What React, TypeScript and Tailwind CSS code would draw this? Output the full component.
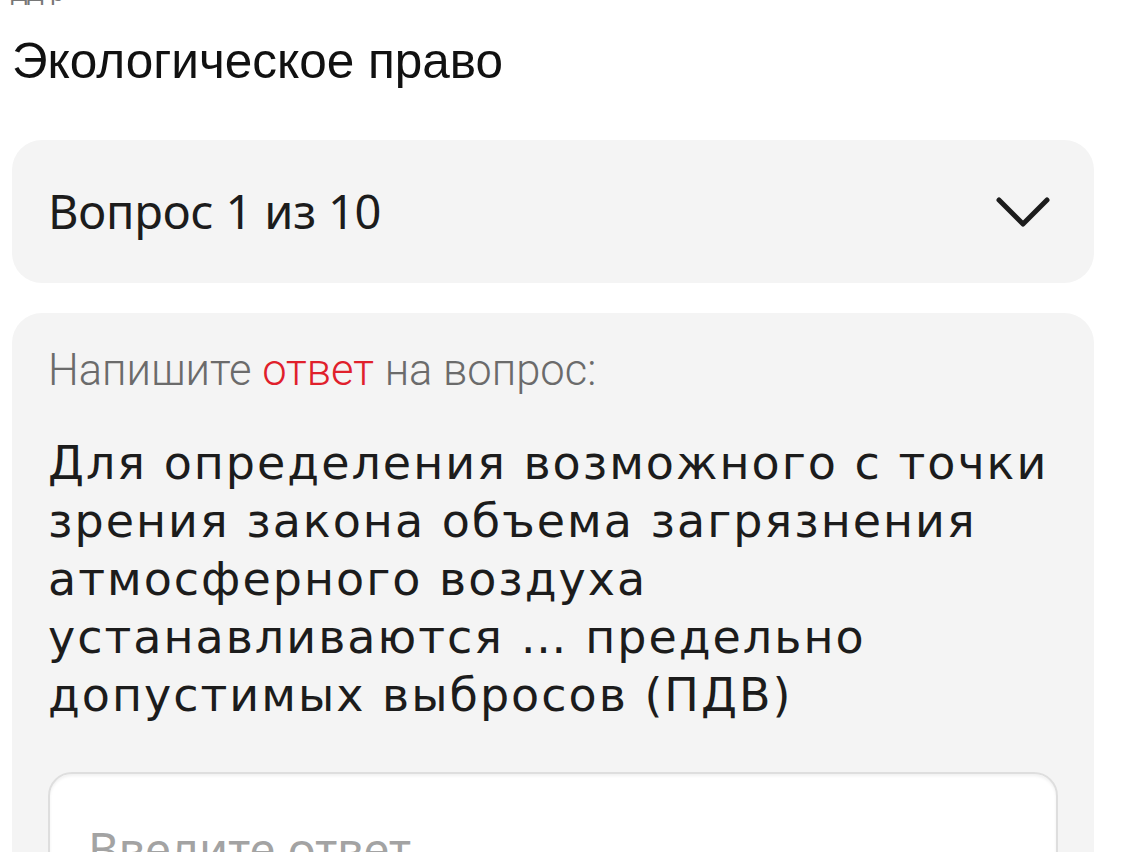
import React from "react";

export default function App() {
  return (
    <div className="w-[1142px] h-[852px] overflow-hidden bg-white">
      <div className="h-[5px] overflow-hidden relative">
        <div className="absolute left-[11px] bottom-0 text-[24px] leading-[24px] text-[#777]" style={{ fontFamily: '"Liberation Sans", Arial, sans-serif' }}>
          ДД р
        </div>
      </div>
      <h1
        className="pl-[12px] mt-[27px] text-[49.5px] leading-[58px] text-[#111] font-normal"
        style={{ fontFamily: '"Liberation Sans", Arial, sans-serif' }}
      >
        Экологическое право
      </h1>
      <div className="ml-[12px] w-[1082px] mt-[50px] flex flex-col gap-[30px]" style={{ fontFamily: '"Noto Sans", sans-serif' }}>
        <div className="h-[143px] rounded-[30px] bg-[#f4f4f4] flex items-center justify-between pl-[36px] pr-[44px]">
          <span className="text-[47px] text-[#1c1c1c] tracking-[-0.2px]">Вопрос 1 из 10</span>
          <svg width="54" height="30" viewBox="0 0 54 30" fill="none">
            <path d="M3 3 L27 27 L51 3" stroke="#1c1c1c" strokeWidth="5" strokeLinecap="round" strokeLinejoin="round" />
          </svg>
        </div>
        <div className="rounded-[30px] bg-[#f4f4f4] px-[36px] pt-[35px] pb-[40px]">
          <p className="text-[43.5px] leading-[46px] font-light text-[#6b6b6b]" style={{ fontFamily: 'Roboto, sans-serif' }}>
            Напишите <span className="text-[#e0202b]">ответ</span> на вопрос:
          </p>
          <p className="mt-[40px] text-[46px] leading-[58px] text-[#1c1c1c] tracking-[2px]" style={{ fontFamily: '"DejaVu Sans", sans-serif' }}>
            Для определения возможного с точки<br />
            зрения закона объема загрязнения<br />
            атмосферного воздуха<br />
            устанавливаются … предельно<br />
            допустимых выбросов (ПДВ)
          </p>
          <div className="mt-[48px] h-[140px] rounded-[24px] bg-white border-2 border-[#dedede] shadow-[inset_0_2px_3px_rgba(0,0,0,0.06)] pl-[38px] pt-[40px]">
            <span className="text-[47px] text-[#a3a3a3]">Введите ответ</span>
          </div>
        </div>
      </div>
    </div>
  );
}
